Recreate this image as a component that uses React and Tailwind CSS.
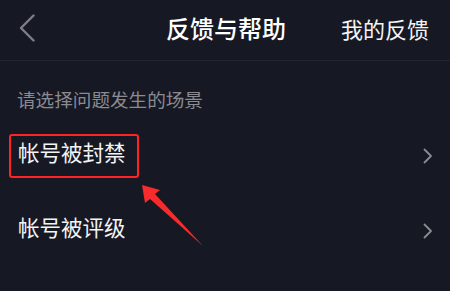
import React from 'react';

const font = { fontFamily: '"Noto Sans CJK SC", "Noto Sans", sans-serif' };

const ChevronRight = () => (
  <svg width="10" height="16" viewBox="0 0 10 16" className="mt-[7px]">
    <path d="M1.5 1.5 L8 8 L1.5 14.5" fill="none" stroke="#8a8b91" strokeWidth="1.8" strokeLinecap="round" strokeLinejoin="round" />
  </svg>
);

const Row = ({ label, children }) => (
  <div className="relative flex h-[75px] items-center justify-between pb-[3px] pl-[18px] pr-[17px]">
    <span className="text-[21.5px] leading-[22px] text-[#f4f4f5]">{label}</span>
    <ChevronRight />
    {children}
  </div>
);

export default function App() {
  return (
    <div style={font} className="relative h-[291px] w-[450px] overflow-hidden bg-[#161823]">
      <div className="grid h-[61px] grid-cols-[1fr_auto_1fr] items-center border-b border-[#22242f] pb-[4px] pl-[19px] pr-[21px]">
        <svg width="16" height="28" viewBox="0 0 16 28">
          <path d="M14.5 1.5 L2 14 L14.5 26.5" fill="none" stroke="#7e7f86" strokeWidth="2.4" strokeLinecap="round" strokeLinejoin="round" />
        </svg>
        <span className="pl-[4px] text-[24px] font-medium leading-[24px] text-white">反馈与帮助</span>
        <span className="justify-self-end text-[22px] leading-[22px] text-[#f4f4f5]">我的反馈</span>
      </div>

      <div className="pl-[17px] pt-[28px] pb-[8px] text-[18.6px] leading-[19px] text-[#8a8b91]">
        请选择问题发生的场景
      </div>

      <Row label="帐号被封禁">
        <div className="absolute left-[9px] top-[18px] h-[44px] w-[130px] rounded-[3px] border-2 border-[#ff2424]" />
      </Row>
      <Row label="帐号被评级" />

      <svg className="pointer-events-none absolute left-0 top-0" width="450" height="291" viewBox="0 0 450 291">
        <polygon points="142,185 160,190 155,194 203,246 150,199 145,203" fill="#f62b2b" />
      </svg>
    </div>
  );
}
